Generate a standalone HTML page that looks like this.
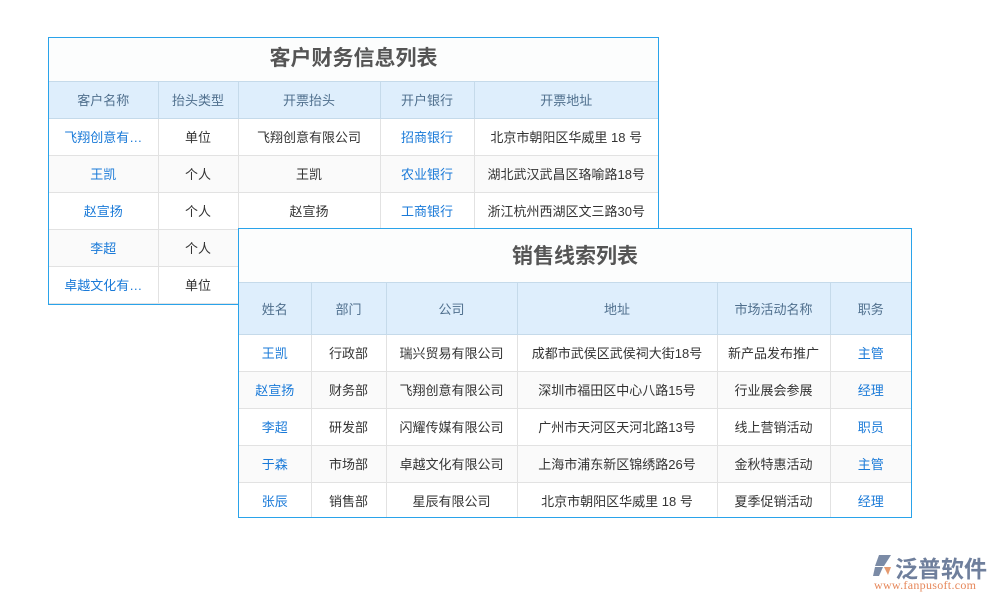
<!DOCTYPE html><html><head><meta charset="utf-8"><style>
body{margin:0;width:1000px;height:600px;background:#fff;position:relative;font-family:"Liberation Sans","Noto Sans CJK SC",sans-serif;overflow:hidden}
.t{position:absolute;border:1px solid #2aa3ea;background:#fff;box-sizing:border-box;overflow:hidden}
table{border-collapse:collapse;width:100%;table-layout:fixed}
td,th{border:1px solid #e2e2e2;text-align:center;font-size:13px;color:#333;font-weight:normal;white-space:nowrap;overflow:hidden;text-overflow:ellipsis;padding:0 4px}
th{background:#deeefc;color:#4f6f8d;border-color:#c5daea}
.ttl{font-size:21px;font-weight:bold;color:#555;text-align:center;background:#fcfdfd;border-bottom:1px solid #c5daea;box-sizing:border-box}
.b{color:#1a7ad8}
tr td:first-child,tr th:first-child{border-left:none}
tr td:last-child,tr th:last-child{border-right:none}
tr:first-child th{border-top:none}
tr.alt td{background:#fafafa}
</style></head><body>
<div class="t" style="left:48px;top:37px;width:611px;height:268px">
<div class="ttl" style="height:44px;line-height:42px">客户财务信息列表</div>
<table>
<colgroup><col style="width:109px"><col style="width:80px"><col style="width:142px"><col style="width:94px"><col></colgroup>
<tr style="height:36px"><th>客户名称</th><th>抬头类型</th><th>开票抬头</th><th>开户银行</th><th>开票地址</th></tr>
<tr style="height:37px"><td class="b">飞翔创意有…</td><td>单位</td><td>飞翔创意有限公司</td><td class="b">招商银行</td><td>北京市朝阳区华威里 18 号</td></tr>
<tr style="height:37px" class="alt"><td class="b">王凯</td><td>个人</td><td>王凯</td><td class="b">农业银行</td><td>湖北武汉武昌区珞喻路18号</td></tr>
<tr style="height:37px"><td class="b">赵宣扬</td><td>个人</td><td>赵宣扬</td><td class="b">工商银行</td><td>浙江杭州西湖区文三路30号</td></tr>
<tr style="height:37px" class="alt"><td class="b">李超</td><td>个人</td><td></td><td></td><td></td></tr>
<tr style="height:37px"><td class="b">卓越文化有…</td><td>单位</td><td></td><td></td><td></td></tr>
</table></div>
<div class="t" style="left:238px;top:228px;width:674px;height:290px">
<div class="ttl" style="height:54px;line-height:56px">销售线索列表</div>
<table>
<colgroup><col style="width:72px"><col style="width:75px"><col style="width:131px"><col style="width:200px"><col style="width:113px"><col></colgroup>
<tr style="height:51px"><th>姓名</th><th>部门</th><th>公司</th><th>地址</th><th>市场活动名称</th><th>职务</th></tr>
<tr style="height:37px"><td class="b">王凯</td><td>行政部</td><td>瑞兴贸易有限公司</td><td>成都市武侯区武侯祠大街18号</td><td>新产品发布推广</td><td class="b">主管</td></tr>
<tr style="height:37px" class="alt"><td class="b">赵宣扬</td><td>财务部</td><td>飞翔创意有限公司</td><td>深圳市福田区中心八路15号</td><td>行业展会参展</td><td class="b">经理</td></tr>
<tr style="height:37px"><td class="b">李超</td><td>研发部</td><td>闪耀传媒有限公司</td><td>广州市天河区天河北路13号</td><td>线上营销活动</td><td class="b">职员</td></tr>
<tr style="height:37px" class="alt"><td class="b">于森</td><td>市场部</td><td>卓越文化有限公司</td><td>上海市浦东新区锦绣路26号</td><td>金秋特惠活动</td><td class="b">主管</td></tr>
<tr style="height:37px"><td class="b">张辰</td><td>销售部</td><td>星辰有限公司</td><td>北京市朝阳区华威里 18 号</td><td>夏季促销活动</td><td class="b">经理</td></tr>
</table></div>
<div style="position:absolute;left:872px;top:554px;width:22px;height:24px">
<svg width="22" height="24" viewBox="0 0 22 24"><path d="M7 1h12L12 12H3z" fill="#7b8ba6"/><path d="M3 13h8l-4 9H1z" fill="#7b8ba6"/><path d="M12 13h7l-3 8z" fill="#e69a6f"/></svg></div>
<div style="position:absolute;left:895px;top:550px;font-size:23px;color:#6f7f9c;font-weight:bold">泛普软件</div>
<div style="position:absolute;left:874px;top:578px;font-size:12px;color:#e6875a;font-family:'Liberation Serif',serif;letter-spacing:0.3px">www.fanpusoft.com</div>
</body></html>
